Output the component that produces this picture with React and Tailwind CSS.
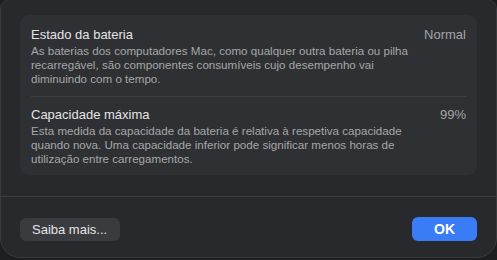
const rows = [
  {
    title: "Estado da bateria",
    value: "Normal",
    text: [
      "As baterias dos computadores Mac, como qualquer outra bateria ou pilha",
      "recarregável, são componentes consumíveis cujo desempenho vai",
      "diminuindo com o tempo.",
    ],
  },
  {
    title: "Capacidade máxima",
    value: "99%",
    text: [
      "Esta medida da capacidade da bateria é relativa à respetiva capacidade",
      "quando nova. Uma capacidade inferior pode significar menos horas de",
      "utilização entre carregamentos.",
    ],
  },
];

const App = () => {
  return (
    <div
      className="w-[497px] h-[260px] bg-[#1d1e20] overflow-hidden"
      style={{ fontFamily: '"Liberation Sans", Arial, sans-serif' }}
    >
      <div className="w-[497px] h-[259px] -mt-[1px] bg-[#28292c] rounded-t-[10px] rounded-b-[20px] border border-[#3a3b3e] flex flex-col">
        {/* Info card */}
        <div className="mx-[19px] mt-[15px] h-[160px] bg-[#2f3033] rounded-[9px] px-[11px] flex flex-col">
          {rows.map((row, i) => (
            <div
              key={row.title}
              className={
                i === 0
                  ? "pt-[11px] pb-[10px] border-b border-[#3d3e41]"
                  : "pt-[9px]"
              }
            >
              <div className="flex justify-between items-baseline">
                <span className="text-[13px] leading-[17px] text-[#e3e3e4]">{row.title}</span>
                <span className="text-[13px] leading-[17px] text-[#a3a4a6]">{row.value}</span>
              </div>
              <div className="mt-[1px] text-[11.6px] leading-[14px] text-[#a6a7a9]">
                {row.text.map((line) => (
                  <div key={line}>{line}</div>
                ))}
              </div>
            </div>
          ))}
        </div>

        {/* Divider */}
        <div className="mt-[21px] h-px bg-[#3c3d40]" />

        {/* Buttons */}
        <div className="flex justify-between items-start px-[19px] pt-[20px]">
          <button className="mt-[1px] w-[100px] h-[23px] rounded-[6px] bg-[#3a3b3e] text-[13px] text-[#e4e4e5] text-left pl-[12px]">
            Saiba mais...
          </button>
          <button className="w-[65px] h-[24px] rounded-[6px] bg-[#3a7cf6] text-[14px] font-semibold text-white">
            OK
          </button>
        </div>
      </div>
    </div>
  );
};

export default App;
